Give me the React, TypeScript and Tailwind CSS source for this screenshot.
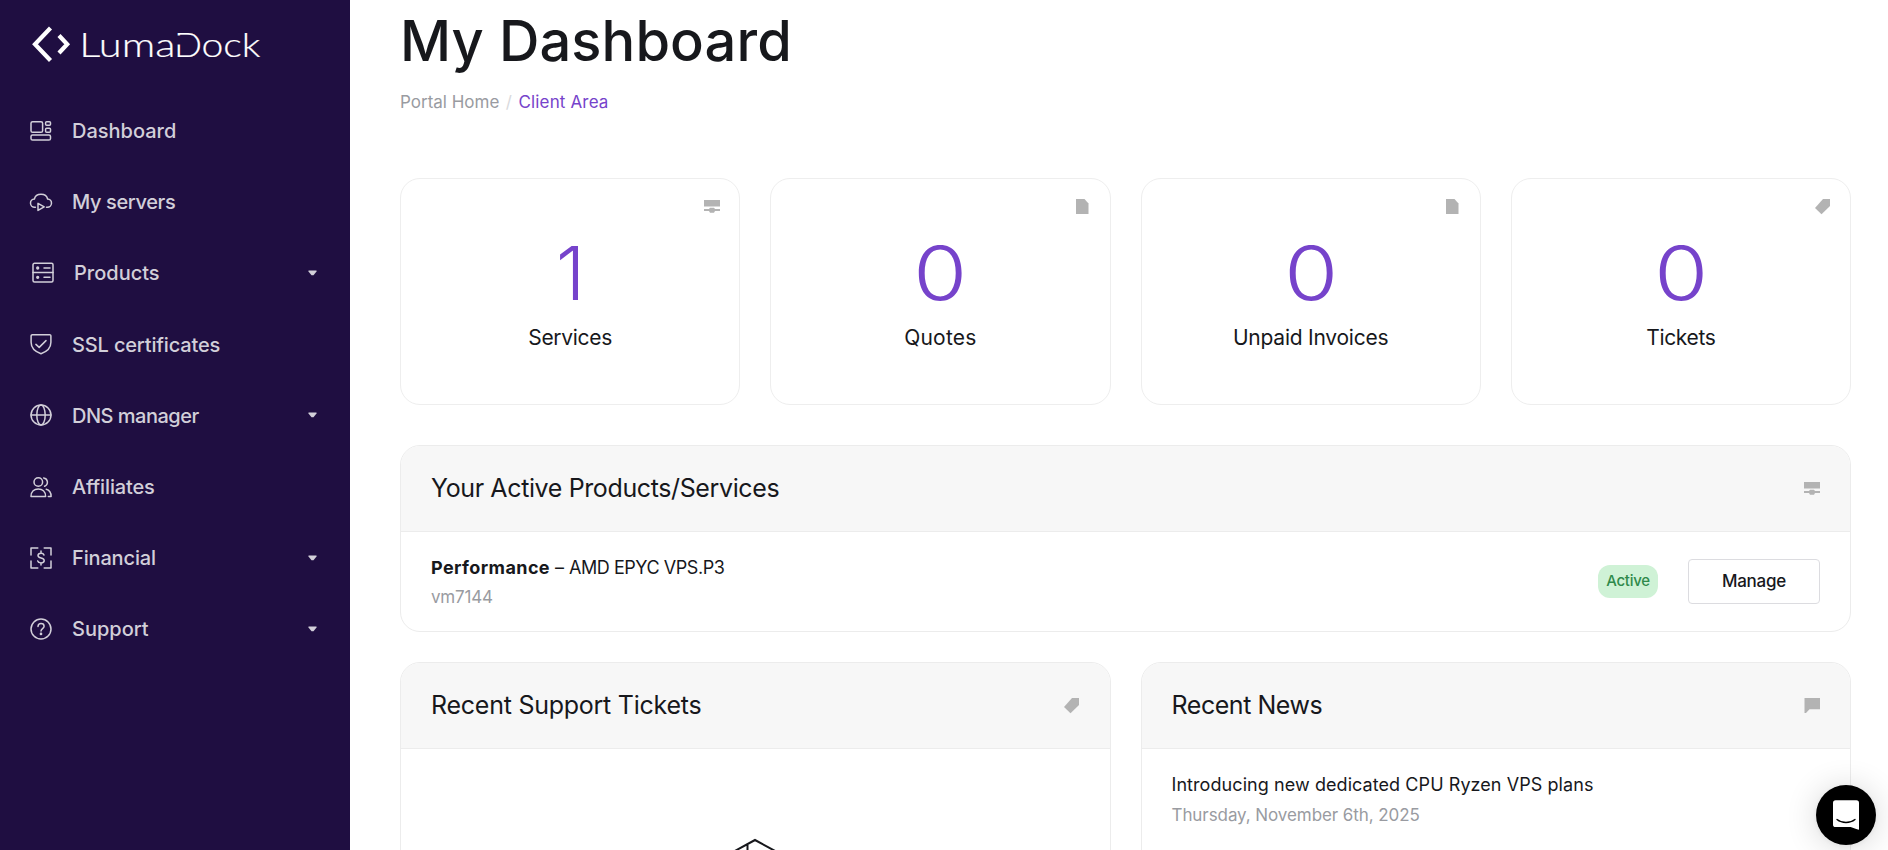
import type { ReactNode } from 'react';
import clsx from 'clsx';

interface NavItem {
  label: string;
  icon: ReactNode;
  expandable?: boolean;
  className?: string;
}

const NAV_ITEMS: NavItem[] = [
  {
    label: 'Dashboard',
    icon: (
      <>
        <rect x="2" y="2.7" width="11.6" height="10.6" rx="1.6" />
        <rect x="16.6" y="2.7" width="4.9" height="3.6" rx="1" />
        <rect x="16.6" y="9.3" width="4.9" height="4" rx="1" />
        <rect x="2" y="15.9" width="19.5" height="5.2" rx="1.6" />
      </>
    ),
  },
  {
    label: 'My servers',
    className: 'tracking-[-0.38px]',
    icon: (
      <>
        <path d="M6.4 17.2H5.8A4.1 4.1 0 0 1 5.4 9C6 6.3 8.8 4.3 12 4.3s6 2 6.6 4.7a4.1 4.1 0 0 1-.4 8.2h-.7" />
        <path d="M9 13.3v7.1l6.2-3.5z" />
      </>
    ),
  },
  {
    label: 'Products',
    expandable: true,
    className: 'pl-[2px]',
    icon: (
      <>
        <rect x="2" y="2.3" width="20" height="18.7" rx="1.5" />
        <path d="M2 11.6h20M13 7h6M13 16.3h6" />
        <circle cx="6.7" cy="7" r=".9" fill="currentColor" />
        <circle cx="6.7" cy="16.3" r=".9" fill="currentColor" />
      </>
    ),
  },
  {
    label: 'SSL certificates',
    className: 'tracking-[-0.15px]',
    icon: (
      <>
        <path d="M3.3 2.7h17.4a1.2 1.2 0 0 1 1.2 1.2v6.4c0 6.9-5.8 10-9.9 11.4-4.1-1.4-9.9-4.5-9.9-11.4V3.9a1.2 1.2 0 0 1 1.2-1.2z" />
        <path d="m6.9 12.4 3.3 3L17 8.6" />
      </>
    ),
  },
  {
    label: 'DNS manager',
    expandable: true,
    className: 'tracking-[-0.5px]',
    icon: (
      <>
        <circle cx="12" cy="12" r="10" />
        <ellipse cx="12" cy="12" rx="4.2" ry="10" />
        <path d="M2 12h20" />
      </>
    ),
  },
  {
    label: 'Affiliates',
    className: 'tracking-[-0.15px]',
    icon: (
      <>
        <circle cx="9.3" cy="7" r="4.3" />
        <path d="M2 21.5c0-5 3.3-7.5 7.3-7.5s7.3 2.500 7.300 7.500zM14.600 2.900a4.300 4.300 0 0 1 1 8.300M17.200 14.300c3 .8 4.900 3.500 4.900 7.200h-2.800" />
      </>
    ),
  },
  {
    label: 'Financial',
    expandable: true,
    className: 'tracking-[-0.15px]',
    icon: (
      <>
        <path d="M8.8 2H2v7M15.2 2H22v7M8.8 22H2v-7M15.2 22H22v-7" />
        <path d="M15 9c-.4-1.200-1.500-1.800-3-1.800-1.800 0-3 .8-3 2.300 0 3.300 6.200 1.700 6.200 5 0 1.500-1.300 2.400-3.200 2.400-1.700 0-2.900-.7-3.300-2M12 5v2.200M12 16.900V19" />
      </>
    ),
  },
  {
    label: 'Support',
    expandable: true,
    icon: (
      <>
        <circle cx="12" cy="12" r="10" />
        <path d="M9 9.500c.1-1.800 1.300-2.900 3-2.900s3.100 1.100 3.100 2.700c0 2.100-3.100 2.400-3.100 4.600" />
        <circle cx="12" cy="16.900" r=".6" fill="currentColor" />
      </>
    ),
  },
];

type TileIconName = 'server' | 'file' | 'tag' | 'comment';

const STATS: { value: string; label: string; icon: TileIconName; valueClass: string; labelClass: string }[] = [
  { value: '1', label: 'Services', icon: 'server', valueClass: 'pl-px', labelClass: 'tracking-[-0.3px]' },
  { value: '0', label: 'Quotes', icon: 'file', valueClass: 'scale-x-[1.18]', labelClass: 'tracking-[0.2px]' },
  { value: '0', label: 'Unpaid Invoices', icon: 'file', valueClass: 'scale-x-[1.18]', labelClass: 'tracking-[-0.23px]' },
  { value: '0', label: 'Tickets', icon: 'tag', valueClass: 'scale-x-[1.18]', labelClass: 'tracking-[-0.35px]' },
];

const TILE_PATHS: Record<TileIconName, string> = {
  server: 'M0 1h16v6.600H0zM0 10h5l1-1.200h4L11 10h5v2h-5l-1 1.700H6L5 12H0z',
  file: 'M1 0h8.500l4 4.500V15H1z',
  tag: 'M8 0h7v7L6.500 15.300 0 9z',
  comment: 'M.5 0H16v11.300H5.500L2 15H.5z',
};

function TileIcon({ name, className }: { name: TileIconName; className?: string }) {
  return (
    <svg viewBox="0 0 16 16" className={clsx('size-4 shrink-0 text-[#b3b3b3]', className)}>
      <path d={TILE_PATHS[name]} fill="currentColor" />
    </svg>
  );
}

function Logo() {
  return (
    <svg width="235" height="40" viewBox="0 0 235 40" className="block text-white" aria-label="LumaDock">
      <path d="M21.500 3 6 19.300l15.500 16.200" fill="none" stroke="currentColor" strokeWidth="4.200" />
      <path d="m30 10.500 8.200 8.800-8.200 8.700" fill="none" stroke="currentColor" strokeWidth="4.200" />
      <g fill="currentColor" stroke="currentColor" strokeWidth=".2" fontFamily="Lato, sans-serif" fontWeight="300" fontSize="33">
        <text x="50.300" y="32" textLength="96" lengthAdjust="spacingAndGlyphs">Luma</text>
        <text x="145" y="32" textLength="28" lengthAdjust="spacingAndGlyphs">D</text>
        <text x="172.500" y="32" textLength="59" lengthAdjust="spacingAndGlyphs">ock</text>
      </g>
      {/* opens the stem of the D */}
      <rect x="146.500" y="10.500" width="5.500" height="9" fill="#1f0e41" />
    </svg>
  );
}

function Sidebar() {
  return (
    <aside className="w-[350px] shrink-0 bg-[#1f0e41] text-[#d2cfd9]">
      <div className="pt-[25px] pl-[29px]">
        <Logo />
      </div>
      <nav className="mt-[30px] flex flex-col">
        {NAV_ITEMS.map((item) => (
          <a key={item.label} href="#" className="flex h-[71.2px] items-center pr-[33px] pl-[29px]">
            <span className={clsx('flex items-center gap-[19px] text-xl font-medium', item.className)}>
              <svg
                viewBox="0 0 24 24"
                className="size-6"
                fill="none"
                stroke="currentColor"
                strokeWidth="1.5"
                strokeLinecap="round"
                strokeLinejoin="round"
              >
                {item.icon}
              </svg>
              <span className="pt-px">{item.label}</span>
            </span>
            {item.expandable && (
              <svg viewBox="0 0 9 6" className="ml-auto h-1.5 w-[9px]">
                <path d="M.5.500h8v1L5.500 5.300h-2L.5 1.500z" fill="currentColor" />
              </svg>
            )}
          </a>
        ))}
      </nav>
    </aside>
  );
}

interface PanelProps {
  title: string;
  icon: TileIconName;
  titleClass?: string;
  className?: string;
  children: ReactNode;
}

function Panel({ title, icon, titleClass, className, children }: PanelProps) {
  return (
    <section className={clsx('overflow-hidden rounded-[20px] border border-[#ececec] bg-white', className)}>
      <header className="flex h-[86px] items-center justify-between border-b border-[#ececec] bg-[#f7f7f7] px-[30px]">
        <h2 className={clsx('text-[25px]', titleClass)}>{title}</h2>
        <TileIcon name={icon} />
      </header>
      {children}
    </section>
  );
}

export default function App() {
  return (
    <div className="flex h-[850px] overflow-hidden bg-white font-['Inter',sans-serif] text-[#17181c]">
      <Sidebar />

      <main className="flex-1 pt-[11px] pr-[37px] pl-[50px]">
        <h1 className="text-[56px] leading-[60px] font-medium tracking-[0.1px]">My Dashboard</h1>
        <div className="mt-[19px] flex text-[17px] leading-6 text-[#999ba1]">
          <a href="#">Portal Home</a>
          <span className="mx-[6.5px] text-[#d9dadd]">/</span>
          <a href="#" className="tracking-[0.15px] text-[#7643cb]">
            Client Area
          </a>
        </div>

        <div className="mt-16 grid grid-cols-4 gap-[30px]">
          {STATS.map((stat) => (
            <div
              key={stat.label}
              className="relative h-[227px] rounded-[20px] border border-[#eee] pt-[54px] text-center"
            >
              <TileIcon name={stat.icon} className="absolute top-5 right-[19px]" />
              <div className={clsx('text-[74px] leading-[80px] font-light text-[#7643cb]', stat.valueClass)}>
                {stat.value}
              </div>
              <div className={clsx('mt-[11px] text-[21px] leading-7', stat.labelClass)}>{stat.label}</div>
            </div>
          ))}
        </div>

        <Panel
          title="Your Active Products/Services"
          icon="server"
          titleClass="tracking-[-0.38px]"
          className="mt-10 h-[187px]"
        >
          <div className="flex h-[99px] items-center px-[30px]">
            <div className="pt-0.5">
              <p className="text-lg leading-7 tracking-[-0.45px]">
                <strong className="font-bold tracking-[0.4px]">Performance</strong>
                <span className="mx-[5px] tracking-normal">–</span>AMD EPYC VPS.P3
              </p>
              <p className="text-[17px] leading-[30px] tracking-[-0.19px] text-[#999ba1]">vm7144</p>
            </div>
            <span className="ml-auto flex h-[33px] w-[60px] items-center justify-center rounded-xl bg-[#cff2d6] text-[15px] font-medium tracking-[-0.28px] text-[#2f8a4b]">
              Active
            </span>
            <button className="ml-[30px] h-[45px] w-[132px] rounded border border-[#dcdce0] text-[17px] font-medium tracking-[-0.22px]">
              Manage
            </button>
          </div>
        </Panel>

        <div className="mt-[30px] grid grid-cols-2 gap-[30px]">
          <Panel title="Recent Support Tickets" icon="tag" titleClass="tracking-[-0.25px]" className="h-[400px]">
            <div className="flex justify-center pt-[88px]">
              <svg width="80" height="80" viewBox="0 0 80 80" fill="none" stroke="currentColor" strokeWidth="2">
                <path d="M40 3 7 21v38l33 18 33-18V21zM7 21l33 18 33-18M40 39v38M32.500 7v20" />
              </svg>
            </div>
          </Panel>
          <Panel title="Recent News" icon="comment" titleClass="tracking-[-0.45px]" className="h-[400px]">
            <div className="px-[30px] pt-[22px]">
              <p className="text-lg leading-7 tracking-[0.07px]">Introducing new dedicated CPU Ryzen VPS plans</p>
              <p className="mt-px text-[17px] leading-[30px] tracking-[-0.08px] text-[#999ba1]">
                Thursday, November 6th, 2025
              </p>
            </div>
          </Panel>
        </div>
      </main>

      <button
        aria-label="Open chat"
        className="fixed right-3 bottom-[5px] flex size-[60px] items-center justify-center rounded-full bg-black shadow-[0_1px_6px_rgba(0,0,0,0.06),0_2px_32px_rgba(0,0,0,0.16)]"
      >
        <svg width="28" height="32" viewBox="0 0 28 32">
          <path d="M27 31s-4.700-1.500-8.400-2.900H3.600A2.700 2.700 0 0 1 1 25.400V3.900A2.700 2.700 0 0 1 3.600 1.200h20.800A2.700 2.700 0 0 1 27 3.900z" fill="#fff" />
          <path d="M5 20.500c5 4 13 4 18 0" fill="none" stroke="#000" strokeWidth="1.300" strokeLinecap="round" />
        </svg>
      </button>
    </div>
  );
}
